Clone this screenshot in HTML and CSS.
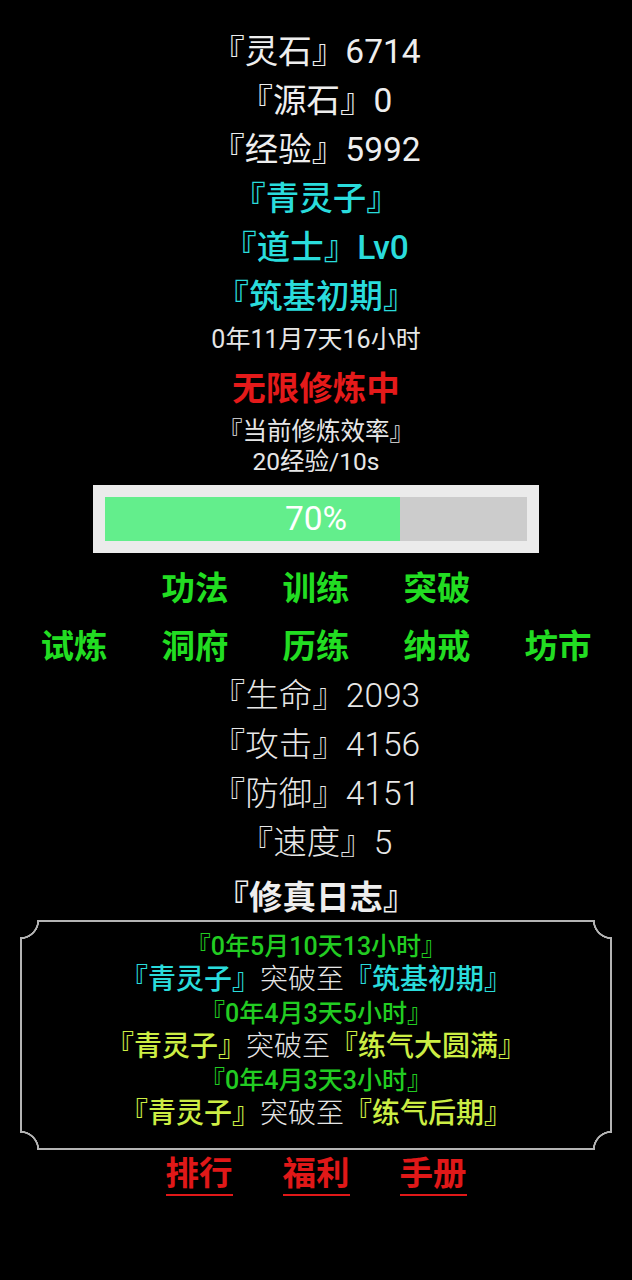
FILE: index.html
```html
<!DOCTYPE html>
<html lang="zh-CN">
<head>
<meta charset="utf-8">
<title>修仙</title>
<link rel="stylesheet" href="styles.css">
</head>
<body>
<main class="page">
  <section class="res">
    <div class="line white">『灵石』6714</div>
    <div class="line white">『源石』0</div>
    <div class="line white">『经验』5992</div>
    <div class="line cyan">『青灵子』</div>
    <div class="line cyan">『道士』Lv0</div>
    <div class="line cyan">『筑基初期』</div>
  </section>
  <div class="age">0年11月7天16小时</div>
  <div class="state">无限修炼中</div>
  <div class="rate">
    <div>『当前修炼效率』</div>
    <div>20经验/10s</div>
  </div>
  <div class="progress">
    <div class="track">
      <div class="fill" style="width:70%"></div>
      <div class="pct">70%</div>
    </div>
  </div>
  <nav class="menu row1">
    <span>功法</span><span>训练</span><span>突破</span>
  </nav>
  <nav class="menu row2">
    <span>试炼</span><span>洞府</span><span>历练</span><span>纳戒</span><span>坊市</span>
  </nav>
  <section class="stats">
    <div class="line">『生命』2093</div>
    <div class="line">『攻击』4156</div>
    <div class="line">『防御』4151</div>
    <div class="line">『速度』5</div>
  </section>
  <h2 class="log-title">『修真日志』</h2>
  <section class="log">
    <div class="log-time">『0年5月10天13小时』</div>
    <div class="log-msg"><span class="c-cyan">『青灵子』</span><span class="c-plain">突破至</span><span class="c-cyan">『筑基初期』</span></div>
    <div class="log-time">『0年4月3天5小时』</div>
    <div class="log-msg"><span class="c-lime">『青灵子』</span><span class="c-plain">突破至</span><span class="c-lime">『练气大圆满』</span></div>
    <div class="log-time">『0年4月3天3小时』</div>
    <div class="log-msg"><span class="c-lime">『青灵子』</span><span class="c-plain">突破至</span><span class="c-lime">『练气后期』</span></div>
  </section>
  <nav class="links">
    <a>排行</a><a>福利</a><a>手册</a>
  </nav>
</main>
</body>
</html>
```
FILE: styles.css
```css
html, body {
  margin: 0;
  padding: 0;
  background: #000;
}
body {
  font-family: Roboto, "Noto Sans CJK SC", sans-serif;
  color: #eeeeee;
  text-align: center;
}
.page {
  width: 632px;
  padding-top: 27px;
}
.line {
  font-size: 33.5px;
  line-height: 49px;
  white-space: nowrap;
}
.white { color: #eeeeee; }
.cyan { color: #2adcdc; font-weight: 500; }
.age {
  font-size: 25px;
  line-height: 37px;
  color: #e6e6e6;
}
.state {
  margin-top: 6px;
  font-size: 33.5px;
  line-height: 49px;
  font-weight: 700;
  color: #e41a1a;
}
.rate {
  margin-top: 4px;
  font-size: 24.5px;
  line-height: 30px;
  color: #e6e6e6;
}
.progress {
  margin: 8px auto 0;
  width: 446px;
  height: 68px;
  box-sizing: border-box;
  padding: 12px;
  background: #ebebeb;
}
.track {
  display: grid;
  height: 44px;
  background: #cccccc;
}
.fill {
  grid-area: 1 / 1;
  background: #63ee8c;
  height: 100%;
}
.pct {
  grid-area: 1 / 1;
  justify-self: center;
  align-self: center;
  font-size: 33.5px;
  line-height: 44px;
  color: #ffffff;
}
.menu {
  display: flex;
  justify-content: center;
  gap: 57px;
  font-size: 33.5px;
  line-height: 48px;
  font-weight: 700;
  color: #22dd22;
}
.menu span { width: 64px; white-space: nowrap; display: flex; justify-content: center; }
.row1 { margin-top: 12px; }
.row2 { margin-top: 10px; }
.stats .line {
  color: #e8e8e8;
  font-weight: 300;
}
.log-title {
  margin: 8px 0 0;
  font-size: 33.5px;
  line-height: 45px;
  font-weight: 700;
  color: #eeeeee;
}
.log {
  margin: 0 20px;
  height: 230px;
  box-sizing: border-box;
  padding-top: 10px;
  background:
    radial-gradient(circle at 0 0, transparent 17px, #b4b4b4 17.5px, #b4b4b4 19px, transparent 19.5px) left top / 20px 20px no-repeat,
    radial-gradient(circle at 100% 0, transparent 17px, #b4b4b4 17.5px, #b4b4b4 19px, transparent 19.5px) right top / 20px 20px no-repeat,
    radial-gradient(circle at 0 100%, transparent 17px, #b4b4b4 17.5px, #b4b4b4 19px, transparent 19.5px) left bottom / 20px 20px no-repeat,
    radial-gradient(circle at 100% 100%, transparent 17px, #b4b4b4 17.5px, #b4b4b4 19px, transparent 19.5px) right bottom / 20px 20px no-repeat,
    linear-gradient(#b4b4b4, #b4b4b4) center top / calc(100% - 36px) 2px no-repeat,
    linear-gradient(#b4b4b4, #b4b4b4) center bottom / calc(100% - 36px) 2px no-repeat,
    linear-gradient(#b4b4b4, #b4b4b4) left center / 2px calc(100% - 36px) no-repeat,
    linear-gradient(#b4b4b4, #b4b4b4) right center / 2px calc(100% - 36px) no-repeat;
}
.log-time {
  font-size: 25px;
  line-height: 33.4px;
  color: #22cc22;
  font-weight: 500;
}
.log-msg {
  font-size: 28px;
  line-height: 33.4px;
  white-space: nowrap;
}
.c-cyan { color: #2adcdc; font-weight: 500; }
.c-lime { color: #ccee44; font-weight: 500; }
.c-plain { color: #e6e6e6; font-weight: 300; }
.links {
  margin-top: 4px;
  display: flex;
  justify-content: center;
  gap: 50px;
}
.links a {
  display: block;
  font-size: 33.5px;
  line-height: 40px;
  font-weight: 700;
  color: #e01818;
  border-bottom: 2px solid #e01818;
}
```
